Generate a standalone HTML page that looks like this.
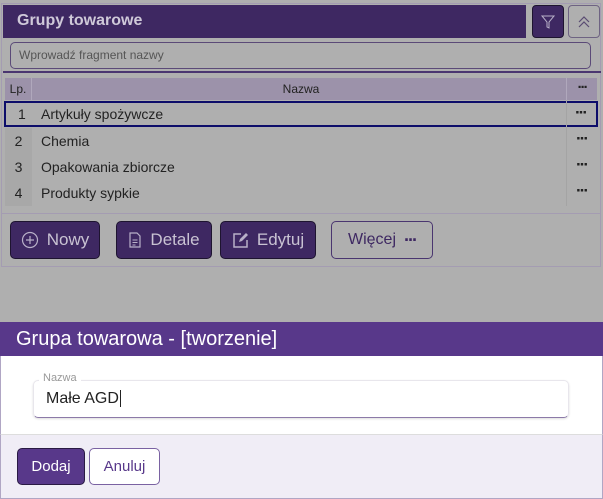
<!DOCTYPE html><html><head><style>
*{box-sizing:border-box;margin:0;padding:0}
body{width:603px;height:499px;background:#afafaf;font-family:"Liberation Sans",Arial,sans-serif;position:relative;overflow:hidden}
.a{position:absolute}
.btn{position:absolute;top:221px;height:38px;background:#3e2862;border:1px solid #1e1430;border-radius:5px;color:#c9c3d3;font-size:17px;display:flex;align-items:center;justify-content:center;gap:8px}
.row{position:absolute;left:5px;width:592px;height:26px;font-size:14px;color:#222}
.row .n{position:absolute;left:0;width:27px;height:26px;background:#a8a8a8;text-align:center;line-height:26px}
.row .t{position:absolute;left:36px;line-height:26px}
.row .d{position:absolute;right:10px;line-height:22px;font-weight:bold;font-size:17px;letter-spacing:-2px}
</style></head><body>
<div class="a" style="left:1px;top:3px;width:600px;height:264px;border:1px solid #a49cb2"></div>
<div class="a" style="left:3px;top:5px;width:523px;height:33px;background:#3e2862;color:#cfc9d9;font-weight:bold;font-size:16px;line-height:31px;padding-left:14px">Grupy towarowe</div>
<div class="a" style="left:532px;top:5px;width:32px;height:33px;background:#3e2862;border:1px solid #1e1430;border-radius:4px"><svg width="32" height="33" style="position:absolute;left:-1px;top:-1px"><path d="M10 11h12l-5 6v6l-2-1v-5z" fill="none" stroke="#b8b0c8" stroke-width="1"/></svg></div>
<div class="a" style="left:568px;top:5px;width:32px;height:33px;border:1px solid #6e6382;border-radius:4px"><svg width="32" height="33" style="position:absolute;left:-1px;top:-1px"><path d="M11 17l5-5 5 5M11 22l5-5 5 5" fill="none" stroke="#5a4c72" stroke-width="1.2"/></svg></div>
<div class="a" style="left:10px;top:42px;width:581px;height:27px;border:1px solid #5b4a78;border-radius:5px;font-size:12px;color:#555;line-height:25px;padding-left:8px">Wprowadź fragment nazwy</div>
<div class="a" style="left:3px;top:71px;width:598px;height:2px;background:#4a3670"></div>
<div class="a" style="left:5px;top:78px;width:592px;height:22px;background:#9c92aa;font-size:12px;color:#222">
<span class="a" style="left:0;width:27px;height:22px;line-height:22px;text-align:center;border-right:1px solid #b0a8bc">Lp.</span>
<span class="a" style="left:0;width:592px;text-align:center;line-height:22px">Nazwa</span>
<span class="a" style="right:0;width:31px;height:22px;border-left:1px solid #b0a8bc;text-align:center;line-height:20px;font-weight:bold;font-size:15px;letter-spacing:-2px">···</span></div>
<div class="row" style="top:101px;border:2px solid #0d0d6a;left:4px;width:594px"><span class="t" style="left:35px;line-height:22px">Artykuły spożywcze</span><span class="a" style="left:12px;line-height:22px">1</span><span class="d" style="line-height:20px">···</span></div>
<div class="row" style="top:128px"><span class="n">2</span><span class="t">Chemia</span><span class="d">···</span></div>
<div class="row" style="top:154px"><span class="n">3</span><span class="t">Opakowania zbiorcze</span><span class="d">···</span></div>
<div class="row" style="top:180px"><span class="n">4</span><span class="t">Produkty sypkie</span><span class="d">···</span></div>
<div class="a" style="left:566px;top:100px;width:1px;height:106px;background:#a4a4a4"></div>
<div class="a" style="left:1px;top:213px;width:600px;height:1px;background:#a49cb2"></div>
<div class="btn" style="left:10px;width:90px"><svg width="18" height="18"><circle cx="9" cy="9" r="7.5" fill="none" stroke="#b8b0c8" stroke-width="1.2"/><path d="M9 5v8M5 9h8" stroke="#b8b0c8" stroke-width="1.2"/></svg>Nowy</div>
<div class="btn" style="left:116px;width:96px"><svg width="14" height="18"><path d="M2 2h7l3 3v11H2z" fill="none" stroke="#b8b0c8" stroke-width="1.2"/><path d="M4.5 9h5M4.5 11.5h5M4.5 14h3" stroke="#b8b0c8"/></svg>Detale</div>
<div class="btn" style="left:220px;width:96px"><svg width="17" height="17"><path d="M9 2H2v13h13V8" fill="none" stroke="#b8b0c8" stroke-width="1.5"/><path d="M7 10l1-3 6-6 2 2-6 6z" fill="#b8b0c8"/></svg>Edytuj</div>
<div class="btn" style="left:331px;width:102px;background:transparent;border-color:#4a3670;color:#3e2862;font-size:16px">Więcej <b style="letter-spacing:-2px;font-size:18px">···</b></div>
<div class="a" style="left:0;top:322px;width:603px;height:34px;background:#58388a;color:#fff;font-size:20px;line-height:34px;padding-left:16px">Grupa towarowa - [tworzenie]</div>
<div class="a" style="left:0;top:356px;width:603px;height:79px;background:#fff;border-left:1px solid #b0a6c4;border-right:1px solid #b0a6c4;border-bottom:1px solid #ddd"></div>
<div class="a" style="left:33px;top:380px;width:536px;height:38px;border:1px solid #e8e6ec;border-bottom:1px solid #8c7aa8;border-radius:5px;box-shadow:0 1px 2px #ddd;font-size:16px;color:#222;line-height:36px;padding-left:12px">Małe AGD<span style="border-left:1px solid #222;margin-left:1px"></span></div>
<div class="a" style="left:39px;top:372px;background:#fff;padding:0 4px;font-size:11px;color:#999">Nazwa</div>
<div class="a" style="left:0;top:435px;width:603px;height:64px;background:#f0edf6;border-left:1px solid #b0a6c4;border-right:1px solid #b0a6c4;border-bottom:1px solid #b0a6c4"></div>
<div class="a" style="left:17px;top:448px;width:68px;height:37px;background:#58388a;border:1px solid #2a1a44;border-radius:5px;color:#fff;font-size:15px;text-align:center;line-height:35px">Dodaj</div>
<div class="a" style="left:89px;top:448px;width:71px;height:37px;background:#fff;border:1px solid #7a62a2;border-radius:5px;color:#58388a;font-size:15px;text-align:center;line-height:35px">Anuluj</div>
</body></html>
